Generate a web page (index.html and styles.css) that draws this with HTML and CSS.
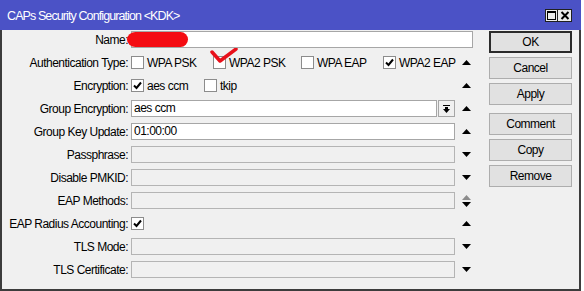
FILE: index.html
```html
<!DOCTYPE html>
<html>
<head>
<meta charset="utf-8">
<link rel="stylesheet" href="styles.css">
</head>
<body>
<div class="window">
  <div class="titlebar">
    <span class="title">CAPs Security Configuration &lt;KDK&gt;</span>
    <div class="tb-buttons">
      <span class="tb-btn max"><svg width="11" height="11" viewBox="0 0 11 11"><rect x="1.5" y="1.5" width="8" height="8" fill="none" stroke="#000" stroke-width="1"/><rect x="1" y="1" width="9" height="2" fill="#000"/></svg></span>
      <span class="tb-btn close"><svg width="12" height="11" viewBox="0 0 12 11"><path d="M2.5 2 L9.5 9 M9.5 2 L2.5 9" stroke="#000" stroke-width="2"/></svg></span>
    </div>
  </div>
  <div class="body">
    <div class="form">
      <div class="row">
        <span class="lbl">Name:</span>
        <div class="field wide"></div>
      </div>
      <div class="row">
        <span class="lbl">Authentication Type:</span>
        <div class="checks">
          <span class="opt w82"><span class="cb"></span>WPA PSK</span>
          <span class="opt w88"><span class="cb"></span>WPA2 PSK</span>
          <span class="opt w82"><span class="cb"></span>WPA EAP</span>
          <span class="opt"><span class="cb"><svg width="11" height="11" viewBox="0 0 11 11"><path d="M2 5.5 L4.5 8 L9 2.5" fill="none" stroke="#000" stroke-width="2"/></svg></span>WPA2 EAP</span>
        </div>
        <span class="arr"><svg width="9" height="5"><polygon points="0,5 4.5,0 9,5" fill="#000"/></svg></span>
      </div>
      <div class="row">
        <span class="lbl">Encryption:</span>
        <div class="checks">
          <span class="opt w73"><span class="cb"><svg width="11" height="11" viewBox="0 0 11 11"><path d="M2 5.5 L4.5 8 L9 2.5" fill="none" stroke="#000" stroke-width="2"/></svg></span>aes ccm</span>
          <span class="opt"><span class="cb"></span>tkip</span>
        </div>
        <span class="arr"><svg width="9" height="5"><polygon points="0,5 4.5,0 9,5" fill="#000"/></svg></span>
      </div>
      <div class="row">
        <span class="lbl">Group Encryption:</span>
        <div class="field short">aes ccm</div>
        <span class="dd"><svg width="7" height="8" viewBox="0 0 7 8"><rect x="0" y="0" width="7" height="1" fill="#000"/><rect x="2" y="2" width="3" height="2" fill="#000"/><polygon points="0,4 7,4 3.5,8" fill="#000"/></svg></span>
        <span class="arr"><svg width="9" height="5"><polygon points="0,5 4.5,0 9,5" fill="#000"/></svg></span>
      </div>
      <div class="row">
        <span class="lbl">Group Key Update:</span>
        <div class="field">01:00:00</div>
        <span class="arr"><svg width="9" height="5"><polygon points="0,5 4.5,0 9,5" fill="#000"/></svg></span>
      </div>
      <div class="row">
        <span class="lbl">Passphrase:</span>
        <div class="field off"></div>
        <span class="arr"><svg width="9" height="5"><polygon points="0,0 9,0 4.5,5" fill="#000"/></svg></span>
      </div>
      <div class="row">
        <span class="lbl">Disable PMKID:</span>
        <div class="field off"></div>
        <span class="arr"><svg width="9" height="5"><polygon points="0,0 9,0 4.5,5" fill="#000"/></svg></span>
      </div>
      <div class="row">
        <span class="lbl">EAP Methods:</span>
        <div class="field off"></div>
        <span class="arr"><svg width="9" height="12" viewBox="0 0 9 12"><polygon points="0,5 4.5,0 9,5" fill="#8c8c8c"/><polygon points="0,7 9,7 4.5,12" fill="#000"/></svg></span>
      </div>
      <div class="row">
        <span class="lbl">EAP Radius Accounting:</span>
        <div class="checks">
          <span class="opt"><span class="cb"><svg width="11" height="11" viewBox="0 0 11 11"><path d="M2 5.5 L4.5 8 L9 2.5" fill="none" stroke="#000" stroke-width="2"/></svg></span></span>
        </div>
        <span class="arr"><svg width="9" height="5"><polygon points="0,5 4.5,0 9,5" fill="#000"/></svg></span>
      </div>
      <div class="row">
        <span class="lbl">TLS Mode:</span>
        <div class="field off"></div>
        <span class="arr"><svg width="9" height="5"><polygon points="0,0 9,0 4.5,5" fill="#000"/></svg></span>
      </div>
      <div class="row">
        <span class="lbl">TLS Certificate:</span>
        <div class="field off"></div>
        <span class="arr"><svg width="9" height="5"><polygon points="0,0 9,0 4.5,5" fill="#000"/></svg></span>
      </div>
    </div>
    <div class="buttons">
      <button class="btn default">OK</button>
      <button class="btn">Cancel</button>
      <button class="btn">Apply</button>
      <button class="btn sep">Comment</button>
      <button class="btn">Copy</button>
      <button class="btn">Remove</button>
    </div>
  </div>
  <div class="redacted"></div>
  <svg class="redcheck" width="30" height="18" viewBox="0 0 30 18"><polyline points="2,4 10,13 26,1" fill="none" stroke="#e8101a" stroke-width="3.5" stroke-linecap="round" stroke-linejoin="round"/></svg>
</div>
</body>
</html>
```

FILE: styles.css
```css
* { box-sizing: border-box; }
html, body { margin: 0; padding: 0; background: #fff; }
body {
  font-family: "Liberation Sans", Arial, sans-serif;
  font-size: 12px;
  letter-spacing: -0.5px;
  color: #000;
}
.window {
  position: relative;
  width: 581px;
  height: 291px;
  display: flex;
  flex-direction: column;
}
.titlebar {
  height: 30px;
  flex: none;
  background: #4b52c6;
  display: flex;
  align-items: center;
  justify-content: space-between;
  padding: 0 9px 0 7px;
}
.title {
  color: #fff;
  font-size: 12.5px;
  letter-spacing: -0.9px;
  margin-top: 1px;
}
.tb-buttons { display: flex; }
.tb-btn {
  height: 13px;
  background: #ececec;
  border: 1px solid #202020;
  display: flex;
  align-items: center;
  justify-content: center;
}
.tb-btn.max { width: 13px; }
.tb-btn.close { width: 14px; border-left: none; }
.body {
  flex: 1;
  background: #f0f0f0;
  border: 2px solid #3c3c3c;
  border-top: none;
  display: flex;
  padding-top: 1px;
}
.form {
  width: 475px;
  display: flex;
  flex-direction: column;
  gap: 6px;
}
.row {
  height: 17px;
  display: flex;
  align-items: center;
}
.lbl {
  width: 129px;
  flex: none;
  text-align: right;
  padding-right: 3px;
  white-space: nowrap;
}
.field {
  width: 324px;
  height: 17px;
  flex: none;
  background: #fff;
  border: 1px solid #a6a6a6;
  padding-left: 2px;
  line-height: 15px;
}
.field.wide { width: 342px; }
.field.short { width: 306px; }
.field.off { background: #f0f0f0; border-color: #b4b4b4; }
.dd {
  width: 17px;
  height: 17px;
  margin-left: 1px;
  border: 1px solid #a6a6a6;
  background: #f0f0f0;
  display: flex;
  align-items: center;
  justify-content: center;
  flex: none;
}
.arr {
  width: 22px;
  flex: none;
  display: flex;
  justify-content: center;
  align-items: center;
}
.arr svg { display: block; }
.checks {
  width: 324px;
  flex: none;
  display: flex;
  align-items: center;
}
.opt {
  display: flex;
  align-items: center;
  white-space: nowrap;
  flex: none;
}
.w82 { width: 82px; }
.w88 { width: 88px; }
.w73 { width: 73px; }
.cb {
  width: 13px;
  height: 13px;
  background: #fff;
  border: 1px solid #8c8c8c;
  margin-right: 3px;
  display: flex;
  align-items: center;
  justify-content: center;
  flex: none;
}
.cb svg { display: block; }
.buttons {
  margin-left: 12px;
  width: 83px;
  display: flex;
  flex-direction: column;
  gap: 4px;
}
.btn {
  height: 22px;
  width: 83px;
  padding: 0;
  background: #e1e1e1;
  border: 1px solid #adadad;
  font-family: inherit;
  font-size: 12px;
  letter-spacing: -0.5px;
  color: #000;
}
.btn.default { border: 2px solid #2b2b2b; }
.btn.sep { margin-top: 4px; }
.redacted {
  position: absolute;
  left: 127px;
  top: 32px;
  width: 61px;
  height: 15px;
  background: #f40c12;
  border-radius: 9px 8px 8px 9px / 8px;
}
.redcheck {
  position: absolute;
  left: 210px;
  top: 48px;
}
```
